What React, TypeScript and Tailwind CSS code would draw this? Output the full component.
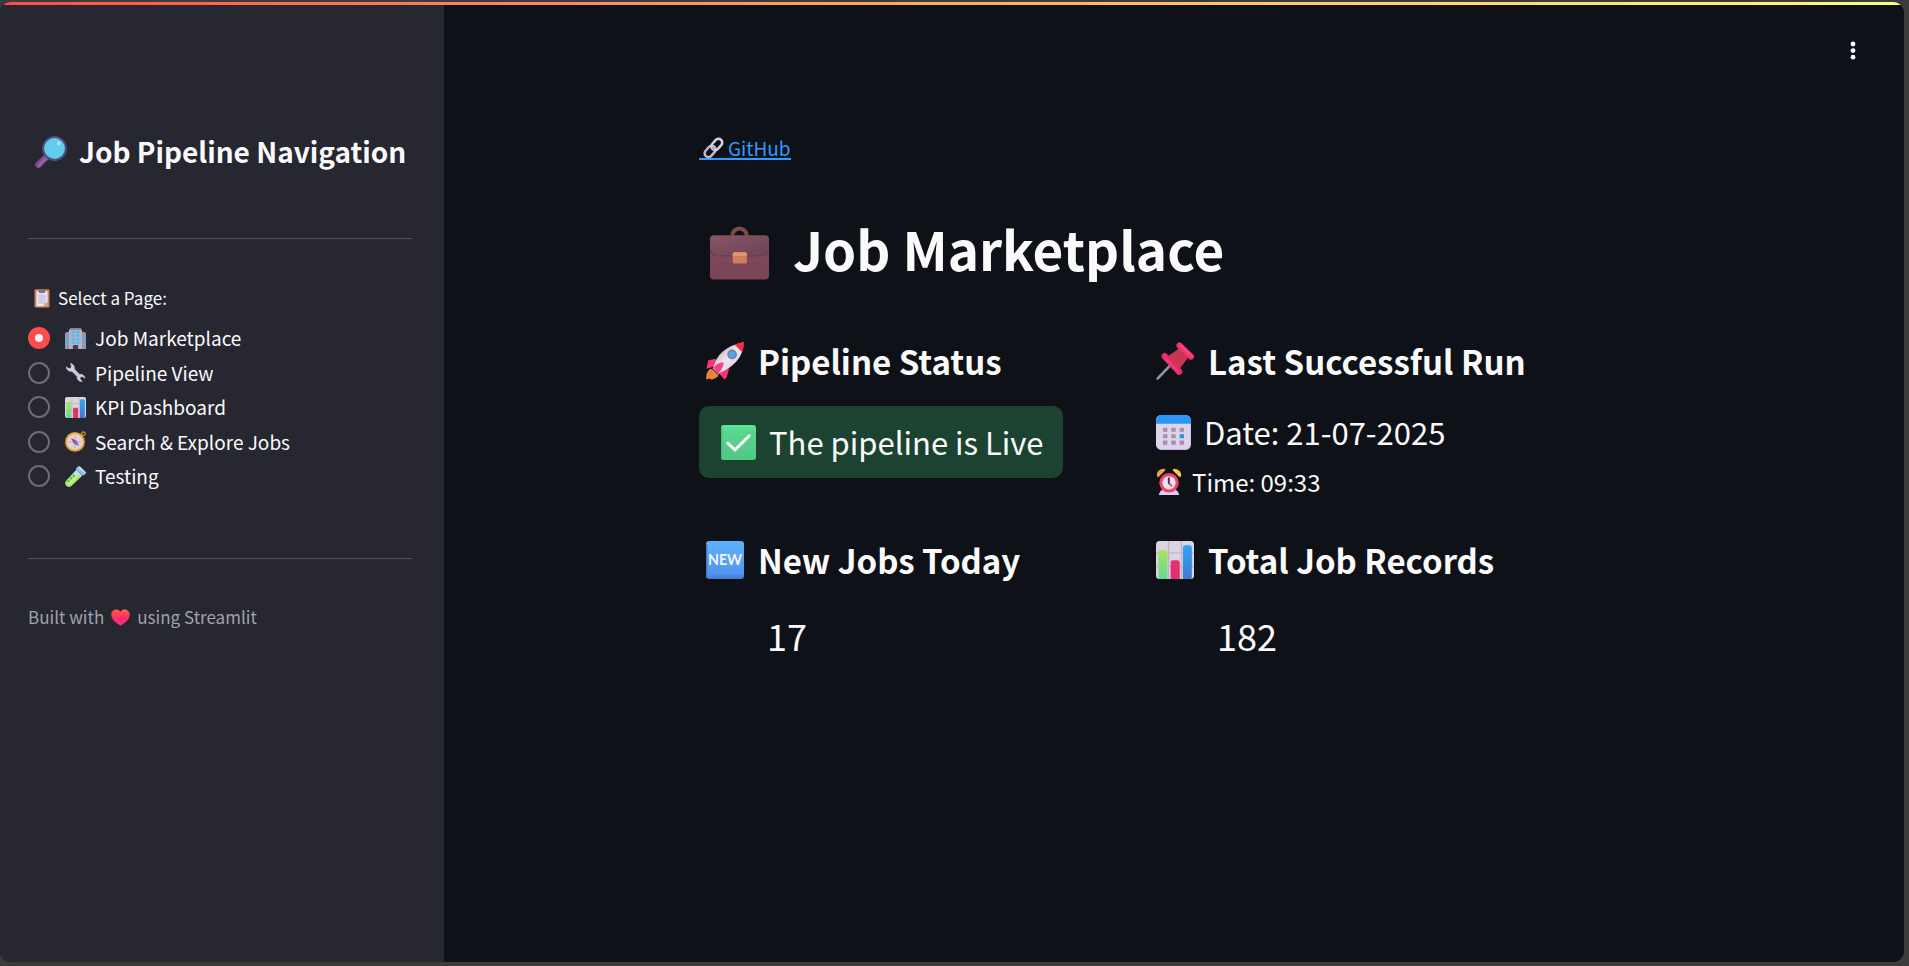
import { useState } from 'react';
import type { ReactNode } from 'react';

type IconProps = { className: string };

function Svg({ className, children }: { className: string; children: ReactNode }) {
  return (
    <svg viewBox="0 0 32 32" className={`shrink-0 overflow-visible ${className}`} aria-hidden="true">
      {children}
    </svg>
  );
}

function Magnifier({ className }: IconProps) {
  return (
    <Svg className={className}>
      <path d="M3.400 29.800 12 21.200" stroke="#7d4a85" strokeWidth="6.400" strokeLinecap="round" />
      <path d="M3.800 30.600 12 22.400" stroke="#9a5f9f" strokeWidth="3" strokeLinecap="round" />
      <circle cx="19.500" cy="13.500" r="12.400" fill="#4a4f86" />
      <circle cx="19.500" cy="13.500" r="10.400" fill="#62cdeb" />
      <circle cx="23.800" cy="8.400" r="2" fill="#b5dcf4" />
    </Svg>
  );
}

function Clipboard({ className }: IconProps) {
  return (
    <Svg className={className}>
      <rect x="4" y="2" width="24" height="29" rx="2" fill="#c98655" />
      <path d="M7 5h18v18l-6 6H7z" fill="#eee6f6" />
      <path d="M10 10h12v10l-4 5h-8z" fill="#d3cbdf" />
      <path d="M25 22v7h-7z" fill="#e0a36b" />
      <path d="M19 29v-6h6z" fill="#bfb2cf" />
      <path d="M11 3h3a2 2 0 0 1 4 0h3v5H11z" fill="#7d7482" />
    </Svg>
  );
}

function Building({ className }: IconProps) {
  return (
    <Svg className={className}>
      <path d="M0 8l2-2h6v26H0zM24 6h6l2 2v24h-8z" fill="#9a93a6" />
      <path d="M6 3 9 0h14l3 3v29H6z" fill="#b9b2c4" />
      <path d="M6 3 9 0h14l3 3z" fill="#8a8396" />
      <path
        d="M10 4.500h5v3.500h-5zM17 4.500h5v3.500h-5zM10 10h5v3.500h-5zM17 10h5v3.500h-5zM10 15.500h5v3.500h-5zM17 15.500h5v3.500h-5zM10 21h5v3.500h-5zM17 21h5v3.500h-5zM1.500 11h3v3.500h-3zM1.500 17h3v3.500h-3zM1.500 23h3v3.500h-3zM27.500 11h3v3.500h-3zM27.500 17h3v3.500h-3zM27.500 23h3v3.500h-3z"
        fill="#3fbdf5"
      />
      <path d="M12 32v-4a2 2 0 0 1 2-2h4a2 2 0 0 1 2 2v4z" fill="#463f55" />
    </Svg>
  );
}

function Wrench({ className }: IconProps) {
  return (
    <Svg className={className}>
      <path
        d="M8.500 2.200c4 .8 6.500 4.600 5.700 8.600l8 8.200c4-.8 7.800 1.700 8.200 5.700l-4-2.600-3 .8-.6 3 3.400 3.600c-4.500.6-8.300-3-7.800-7.500l-8-8C6.300 15 2 11.800 2 7.300l3.800 3 3.400-1 .6-3.200z"
        fill="#d5cce4"
        stroke="#d5cce4"
        strokeWidth="1"
      />
      <path d="m12 14 9 9" stroke="#b5a9c6" strokeWidth="1.200" />
    </Svg>
  );
}

function BarChart({ className }: IconProps) {
  return (
    <Svg className={className}>
      <defs>
        <linearGradient id="bar-green" x1="0" y1="0" x2="0" y2="1">
          <stop stopColor="#a9e357" />
          <stop offset="1" stopColor="#5fdc96" />
        </linearGradient>
        <linearGradient id="bar-blue" x1="0" y1="0" x2="0" y2="1">
          <stop stopColor="#2fa6f8" />
          <stop offset="1" stopColor="#3f79cf" />
        </linearGradient>
      </defs>
      <rect width="32" height="32" rx="3" fill="#dcd3e3" />
      <path d="M10.500 0v32M21.500 0v32M0 10h32M0 21.500h32" stroke="#bdb5c6" strokeWidth="1.200" />
      <path d="M2 32V9.500A2 2 0 0 1 4 7.700h3.500a2 2 0 0 1 2 2V32z" fill="url(#bar-green)" />
      <path d="M12.300 32V18.300a2 2 0 0 1 2-2H18a2 2 0 0 1 2 2V32z" fill="#e2306f" />
      <path d="M22.700 32V5.500a2 2 0 0 1 2-2h3.500a2 2 0 0 1 2 2V31l-1 1z" fill="url(#bar-blue)" />
    </Svg>
  );
}

function Compass({ className }: IconProps) {
  return (
    <Svg className={className}>
      <circle cx="28" cy="4" r="2.800" fill="none" stroke="#d99532" strokeWidth="1.800" />
      <circle cx="15.200" cy="16.600" r="15.200" fill="#dd9430" />
      <circle cx="15.200" cy="16.600" r="13.400" fill="#f0ba4e" />
      <circle cx="15.200" cy="16.600" r="11.800" fill="#dcd3e3" />
      <path d="M15.200 7v19.500M5.500 16.600h19.500" stroke="#b6abbf" strokeWidth="1.500" />
      <path d="m9 10.500 8.400 4-4.400 4.400z" fill="#e6366b" />
      <path d="m21.500 22.800-8.500-3.900 4.400-4.400z" fill="#786f87" />
    </Svg>
  );
}

function TestTube({ className }: IconProps) {
  return (
    <Svg className={className}>
      <path d="m17.500 5.500 9 9L10 30c-2.400 2.300-5.500 2.200-7.700 0-2.300-2.300-2.300-5.500 0-7.800z" fill="#b9dff5" />
      <path d="m10.500 13.500 15.500 1L10 30c-2.400 2.300-5.500 2.200-7.700 0-2.300-2.300-2.300-5.500 0-7.800z" fill="#a5e561" />
      <path d="m5.500 27.500 14-13" stroke="#c8f58b" strokeWidth="3" strokeLinecap="round" />
      <path d="M4 21.500 6.500 24M8 17.500l2.500 2.500M12 13.500l2.500 2.500" stroke="#35a36b" strokeWidth="1.800" />
      <path d="M18.500 1.500 31 12.500l-3.500 1.800L16.500 4.500z" fill="#8fc8f5" />
      <path d="m18.500 1.500 4-1 9.500 9-1 3z" fill="#c2e4fb" />
    </Svg>
  );
}

function Heart({ className }: IconProps) {
  return (
    <Svg className={className}>
      <defs>
        <linearGradient id="heart-fill" x1="0" y1="0" x2="0" y2="1">
          <stop stopColor="#ff5a50" />
          <stop offset=".55" stopColor="#fb2f62" />
          <stop offset="1" stopColor="#fb25a8" />
        </linearGradient>
      </defs>
      <path
        d="M16 6.300C13.800 3 10.800 2.200 7.800 2.600 3 3.300 0 7.300.5 12.300 1.200 19.500 8.500 25 14 28.700q2 1.200 4 0C23.500 25 30.800 19.500 31.500 12.300 32 7.300 29 3.300 24.200 2.600 21.200 2.200 18.200 3 16 6.300z"
        fill="url(#heart-fill)"
      />
      <path d="M17 8c2-4 5-4.500 8.500-4" stroke="#ff7b62" strokeWidth="1.500" fill="none" />
    </Svg>
  );
}

function ChainLink({ className }: IconProps) {
  return (
    <Svg className={className}>
      <g fill="none" strokeWidth="3.800">
        <rect x="-5.800" y="-9.600" width="11.600" height="19.200" rx="5.800" transform="translate(10.800 22) rotate(42)" stroke="#c4b7d0" />
        <rect x="-5.800" y="-9.600" width="11.600" height="19.200" rx="5.800" transform="translate(21 11.400) rotate(42)" stroke="#d8cce2" />
        <path d="m14.500 16.500 2.500 3.500" stroke="#b3a5c0" strokeWidth="2.500" />
      </g>
    </Svg>
  );
}

function Briefcase({ className }: IconProps) {
  return (
    <Svg className={className}>
      <defs>
        <linearGradient id="case-body" x1="0" y1="0" x2="0" y2="1">
          <stop stopColor="#7e4d5c" />
          <stop offset="1" stopColor="#7b4358" />
        </linearGradient>
        <linearGradient id="case-flap" x1="0" y1="0" x2="1" y2="1">
          <stop stopColor="#875563" />
          <stop offset="1" stopColor="#6b4456" />
        </linearGradient>
      </defs>
      <path d="M12 10v-.8c0-2.300 1.800-4 4-4s4 1.700 4 4v.8" fill="none" stroke="#7b4d47" strokeWidth="2.200" />
      <rect x="0" y="9" width="32" height="23.800" rx="2" fill="url(#case-body)" />
      <path d="M0 11a2 2 0 0 1 2-2h28a2 2 0 0 1 2 2v5.500q-.4 3.500-4 3.500H4q-3.600 0-4-3.500z" fill="url(#case-flap)" />
      <path d="M.3 16.500q.4 3.500 4 3.500h23.400q3.600 0 4-3.500" fill="none" stroke="#703a58" strokeWidth=".8" />
      <rect x="12.300" y="18" width="7.700" height="6.200" rx="1" fill="#d27c5e" />
      <path d="M12.300 20v-1a1 1 0 0 1 1-1H19a1 1 0 0 1 1 1v1z" fill="#e09470" />
    </Svg>
  );
}

function Rocket({ className }: IconProps) {
  return (
    <Svg className={className}>
      <defs>
        <linearGradient id="rocket-body" x1="0" y1="0" x2="1" y2="1">
          <stop offset=".2" stopColor="#c3b5bd" />
          <stop offset=".5" stopColor="#f0e4f2" />
          <stop offset="1" stopColor="#d3bfe2" />
        </linearGradient>
      </defs>
      <path d="M4 22.500c-2.500 1-4.300 4.500-3.700 9l3-.7 1.500 1 3-1.300c1.800-.6 3-2.300 3-4.500z" fill="#ee8137" />
      <path d="M8 14 2 15.300.3 22.500l9-2.500zM19.500 22l-2 7.300-1.700 2.400-6-6.500z" fill="#fb3377" />
      <path d="m4.800 22.500 5 5 2-2.500-4.500-4.500z" fill="#4c4374" />
      <path d="M6 22.300C8.500 11 16 3.500 31.500.3 31.700 13.500 22.500 21.500 10.500 26.500z" fill="url(#rocket-body)" />
      <path d="M24 2.300Q28 .5 32 .2q.2 4.300-1.500 8.300C28.800 7 26.200 4.200 24 2.300z" fill="#f42c43" />
      <path d="M6.300 21.700c2-3 5-4.700 8.700-4.500-.3 3.500-2 6.500-5 9.400z" fill="#f7417e" />
      <circle cx="22" cy="10.500" r="4.100" fill="#7b7f9a" />
      <circle cx="22" cy="10.500" r="2.800" fill="#579ff5" />
    </Svg>
  );
}

function CheckMark({ className }: IconProps) {
  return (
    <Svg className={className}>
      <defs>
        <linearGradient id="check-fill" x1="0" y1="0" x2="0" y2="1">
          <stop stopColor="#5fe696" />
          <stop offset=".2" stopColor="#58d68e" />
          <stop offset="1" stopColor="#52c886" />
        </linearGradient>
      </defs>
      <rect width="32" height="32" rx="2.500" fill="url(#check-fill)" />
      <path d="M.7 3v26" stroke="#4bb67c" strokeWidth="1.200" />
      <path d="m6.200 16.500 6.600 6.300L25.800 9.800" fill="none" stroke="#f6f2fb" strokeWidth="2.800" strokeLinecap="round" strokeLinejoin="round" />
    </Svg>
  );
}

function Pushpin({ className }: IconProps) {
  return (
    <Svg className={className}>
      <path d="m1.300 30.800 11.500-12" stroke="#9a919f" strokeWidth="2.200" strokeLinecap="round" />
      <path d="m10 12 10 10.500 7-9.500-7-8z" fill="#c9374f" />
      <path d="m7.300 12 12.200 13" stroke="#e62b68" strokeWidth="5.400" strokeLinecap="round" />
      <path d="M8 13.500 18.500 25" stroke="#f04079" strokeWidth="1.500" strokeLinecap="round" />
      <path d="m19.800 2.800 9.700 9.500" stroke="#f2336e" strokeWidth="5" strokeLinecap="round" />
      <path d="m20.800 2.800 8.500 8.300" stroke="#fa5083" strokeWidth="1.300" strokeLinecap="round" />
    </Svg>
  );
}

function Calendar({ className }: IconProps) {
  return (
    <Svg className={className}>
      <rect width="32" height="32" rx="5" fill="#c9b4e4" />
      <rect width="31.500" height="31" rx="5" fill="#dfd3ec" />
      <path d="M0 8V5a5 5 0 0 1 5-5h22a5 5 0 0 1 5 5v3z" fill="#2a96fb" />
      <path
        d="M6.400 11.600h4v3.800h-4zM14 11.600h4v3.800h-4zM21.600 11.600h4v3.800h-4zM6.400 17.500h4v3.800h-4zM14 17.500h4v3.800h-4zM6.400 23.400h4v3.800h-4zM14 23.400h4v3.800h-4zM21.600 23.400h4v3.800h-4z"
        fill="#9f93ab"
      />
      <path d="M21.600 17.500h4v3.800h-4z" fill="#2b93ea" />
    </Svg>
  );
}

function AlarmClock({ className }: IconProps) {
  return (
    <Svg className={className}>
      <path d="M3.500 32Q5 25.500 10 25h12q5 .5 6.500 7z" fill="#dfc9ec" />
      <path d="M1.500 9.500C-.5 4.500 4.500-.5 10-.2l1.800 1.500-9 9z" fill="#f1a63a" />
      <path d="M30.500 9.500c2-5-3-10-8.500-9.700l-1.800 1.500 9 9z" fill="#fbc944" />
      <circle cx="16" cy="17" r="12" fill="#f04467" />
      <circle cx="16" cy="17" r="8.200" fill="#ece3f3" />
      <path d="M15.800 11.500v6" stroke="#40364e" strokeWidth="2.400" strokeLinecap="round" />
      <path d="m16.500 18 2.500 2.500" stroke="#e8395f" strokeWidth="2.200" strokeLinecap="round" />
    </Svg>
  );
}

function NewBadge({ className }: IconProps) {
  return (
    <Svg className={className}>
      <defs>
        <linearGradient id="new-fill" x1="0" y1="0" x2="0" y2="1">
          <stop stopColor="#5db2fb" />
          <stop offset=".85" stopColor="#5296ee" />
          <stop offset="1" stopColor="#4679cf" />
        </linearGradient>
      </defs>
      <rect width="32" height="32" rx="2.800" fill="url(#new-fill)" />
      <path d="M.6 3v26" stroke="#4479c4" strokeWidth="1.200" />
      <text x="16" y="20.300" textAnchor="middle" fontSize="12" fontWeight="700" fill="#f6f2fb" fontFamily="Lato, sans-serif">
        NEW
      </text>
    </Svg>
  );
}

const pages = [
  { name: 'Job Marketplace', Icon: Building },
  { name: 'Pipeline View', Icon: Wrench },
  { name: 'KPI Dashboard', Icon: BarChart },
  { name: 'Search & Explore Jobs', Icon: Compass },
  { name: 'Testing', Icon: TestTube },
];

function Sidebar() {
  const [page, setPage] = useState(pages[0].name);
  return (
    <aside className="w-[444px] shrink-0 bg-[#262730] px-7 pt-[126px]">
      <h2 className="flex items-center gap-3 pl-[7px] text-[28px] leading-10 font-semibold whitespace-nowrap">
        <Magnifier className="size-8" />
        Job Pipeline Navigation
      </h2>
      <hr className="mt-[67px] mr-1 border-[#505159]" />
      <fieldset className="mt-[47px]">
        <legend className="flex items-center gap-1.5 pl-1 text-[17px] leading-6">
          <Clipboard className="size-5" />
          Select a Page:
        </legend>
        <div className="mt-[13px] flex h-42 flex-col justify-between">
          {pages.map(({ name, Icon }) => (
            <label key={name} className="flex items-center text-[19px] leading-[30px]">
              <input
                type="radio"
                name="page"
                checked={page === name}
                onChange={() => setPage(name)}
                className="size-[22px] appearance-none rounded-full border-2 border-[#6c6d75] checked:border-[7px] checked:border-[#ff4b4b] checked:bg-[#f5f5f7]"
              />
              <Icon className="mr-[9px] ml-[15px] size-[21px]" />
              {name}
            </label>
          ))}
        </div>
      </fieldset>
      <hr className="mt-[67px] mr-1 border-[#505159]" />
      <p className="mt-[46px] flex items-center gap-[7px] text-[17px] leading-6 text-[#a0a2ab]">
        Built with
        <Heart className="size-[19px]" />
        using Streamlit
      </p>
    </aside>
  );
}

function CardTitle({ icon, children }: { icon: ReactNode; children: ReactNode }) {
  return (
    <h3 className="flex items-center gap-3.5 pl-[7px] text-[33px] leading-[42px] font-semibold whitespace-nowrap">
      {icon}
      {children}
    </h3>
  );
}

export default function App() {
  return (
    <div
      className="flex min-h-screen flex-col bg-[#3b3b3b] pt-0.5 pr-[5px] pb-1 text-[#fafafa]"
      style={{ fontFamily: '"Noto Sans CJK SC", "Open Sans", sans-serif' }}
    >
      <div className="flex grow flex-col overflow-hidden rounded-[11px] bg-[#0e1117]">
        <div className="h-[3px] bg-linear-to-r from-[#ff4b4b] to-[#fffd80]" />
        <div className="flex grow">
          <Sidebar />
          <main className="relative grow px-8 pt-33">
            <button type="button" aria-label="Main menu" className="absolute top-[30px] right-[35px] flex size-8 items-center justify-center">
              <svg viewBox="0 0 32 32" className="size-8" fill="#fafafa" aria-hidden="true">
                <circle cx="16" cy="9" r="2.400" />
                <circle cx="16" cy="15.600" r="2.400" />
                <circle cx="16" cy="22.200" r="2.400" />
              </svg>
            </button>
            <div className="mx-auto max-w-[950px]">
              <a
                href="#github"
                className="flex w-fit items-center gap-1 border-b-2 border-[#3399ff] pl-1 text-[19px] leading-[21px] text-[#3399ff]"
              >
                <ChainLink className="size-[21px]" />
                GitHub
              </a>
              <h1 className="mt-14 flex items-center gap-6 pl-[11px] text-[53px] leading-[64px] font-bold whitespace-nowrap">
                <Briefcase className="size-[59px]" />
                Job Marketplace
              </h1>
              <div className="mt-[60px] grid grid-cols-[9fr_10fr] gap-y-[39px]">
                <section>
                  <CardTitle icon={<Rocket className="size-[38px]" />}>Pipeline Status</CardTitle>
                  <p className="mt-6 flex h-[72px] w-fit items-center gap-[13px] rounded-[10px] bg-[#1c4331] pr-[19px] pl-[22px] text-[31px] whitespace-nowrap">
                    <CheckMark className="size-[35px]" />
                    The pipeline is Live
                  </p>
                </section>
                <section>
                  <CardTitle icon={<Pushpin className="size-[38px]" />}>Last Successful Run</CardTitle>
                  <p className="mt-[30px] flex items-center gap-[13px] pl-[7px] text-[31px] leading-10">
                    <Calendar className="size-[35px]" />
                    Date: 21-07-2025
                  </p>
                  <p className="mt-3 flex items-center gap-2.5 pl-[7px] text-[24px] leading-9">
                    <AlarmClock className="size-[26px]" />
                    Time: 09:33
                  </p>
                </section>
                <section>
                  <CardTitle icon={<NewBadge className="size-[38px]" />}>New Jobs Today</CardTitle>
                  <p className="mt-[30px] pl-[68px] text-[36px] leading-[48px]">17</p>
                </section>
                <section>
                  <CardTitle icon={<BarChart className="size-[38px]" />}>Total Job Records</CardTitle>
                  <p className="mt-[30px] pl-[68px] text-[36px] leading-[48px]">182</p>
                </section>
              </div>
            </div>
          </main>
        </div>
      </div>
    </div>
  );
}
